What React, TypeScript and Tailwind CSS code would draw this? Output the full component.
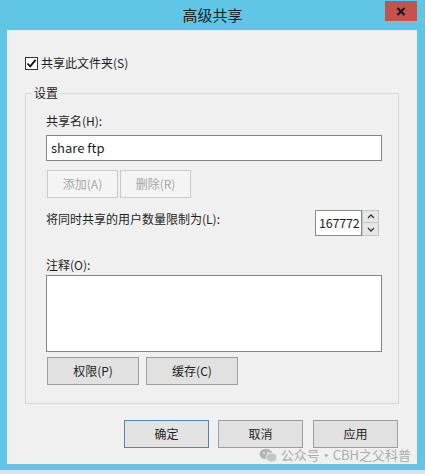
import type { ReactNode } from "react";

const FONT = { fontFamily: '"Noto Sans CJK SC", "Noto Sans", sans-serif' };

function WinButton({
  children,
  w,
  disabled = false,
  primary = false,
  className = "",
}: {
  children: ReactNode;
  w: string;
  disabled?: boolean;
  primary?: boolean;
  className?: string;
}) {
  const tone = disabled
    ? "bg-[#f4f4f4] border-[#cacaca] text-[#a6a6a6]"
    : primary
      ? "bg-[#e3e3e3] border-[#4f86b5] text-[#1e1e1e]"
      : "bg-[#e1e1e1] border-[#9d9d9d] text-[#1e1e1e]";
  return (
    <div
      className={`${w} h-[28px] border flex items-center justify-center text-[12px] leading-[16px] ${tone} ${className}`}
    >
      {children}
    </div>
  );
}

function SpinBox() {
  return (
    <div className="flex mr-[3px]">
      <div className="w-[47px] h-[26px] bg-white border border-[#8a8a8a] flex items-center overflow-hidden pl-[3px] text-[12.5px] text-[#1e1e1e] leading-[16px] tracking-[-0.2px]">
        167772
      </div>
      <div className="flex flex-col w-[17px] h-[26px]">
        <div className="h-[13px] bg-[#e6e6e6] border border-[#c4c4c4] flex items-center justify-center">
          <svg width="8" height="5" viewBox="0 0 8 5">
            <path d="M1 4 L4 1 L7 4" stroke="#333" strokeWidth="1.3" fill="none" />
          </svg>
        </div>
        <div className="h-[13px] bg-[#e6e6e6] border border-t-0 border-[#c4c4c4] flex items-center justify-center">
          <svg width="8" height="5" viewBox="0 0 8 5">
            <path d="M1 1 L4 4 L7 1" stroke="#333" strokeWidth="1.3" fill="none" />
          </svg>
        </div>
      </div>
    </div>
  );
}

export default function App() {
  return (
    <div className="w-[425px] h-[474px] bg-[#61c6e6] flex flex-col overflow-hidden" style={FONT}>
      {/* title bar */}
      <div className="h-[30px] relative flex items-center justify-center">
        <span className="text-[15px] leading-[20px] text-[#1b1b1b]">高级共享</span>
        <div className="absolute left-[385px] top-[1px] w-[32px] h-[20px] bg-[#c75050] flex items-center justify-center">
          <svg width="10" height="9" viewBox="0 0 10 9">
            <path d="M1.5 1 L8.5 8 M8.5 1 L1.5 8" stroke="#1a1a1a" strokeWidth="2.2" />
          </svg>
        </div>
      </div>

      {/* client area */}
      <div className="ml-[7px] w-[410px] h-[434px] bg-[#f0f0f0] relative flex flex-col text-[#1e1e1e]">
        <div className="pt-[25px] pl-[18px] flex items-center h-[41px] gap-[3px]">
          <div className="w-[13px] h-[13px] bg-white border border-[#333] flex items-center justify-center">
            <svg width="11" height="11" viewBox="0 0 11 11">
              <path d="M1.5 5.5 L4.2 8.3 L9.6 1.8" stroke="#111" strokeWidth="1.8" fill="none" />
            </svg>
          </div>
          <span className="text-[12px] leading-[16px]">共享此文件夹(S)</span>
        </div>

        {/* settings group */}
        <div className="mt-[22px] mx-[18px] border border-[#d8d8d8] relative pl-[20px] pr-[16px] pt-[19px] pb-[18px]">
          <span className="absolute left-[6px] top-[-9px] px-[2px] bg-[#f0f0f0] text-[12px] leading-[16px]">
            设置
          </span>

          <div className="text-[12px] leading-[16px]">共享名(H):</div>
          <div className="mt-[6px] h-[26px] bg-white border border-[#858585] flex items-center px-[4px] text-[13px] leading-[16px]">
            share ftp
          </div>

          <div className="mt-[9px] flex gap-[2px] pl-[1px]">
            <WinButton w="w-[71px]" disabled>
              添加(A)
            </WinButton>
            <WinButton w="w-[71px]" disabled>
              删除(R)
            </WinButton>
          </div>

          <div className="mt-[12px] flex items-start justify-between">
            <span className="mt-[1px] text-[12px] leading-[16px]">将同时共享的用户数量限制为(L):</span>
            <SpinBox />
          </div>

          <div className="mt-[21px] text-[12px] leading-[16px]">注释(O):</div>
          <div className="mt-[2px] h-[77px] bg-white border border-[#858585]" />

          <div className="mt-[5px] flex gap-[7px] pl-[1px]">
            <WinButton w="w-[92px]">权限(P)</WinButton>
            <WinButton w="w-[92px]">缓存(C)</WinButton>
          </div>
        </div>

        {/* dialog buttons */}
        <div className="mt-[16px] pr-[19px] flex justify-end">
          <WinButton w="w-[85px]" primary>
            确定
          </WinButton>
          <WinButton w="w-[85px]" className="ml-[9px]">
            取消
          </WinButton>
          <WinButton w="w-[85px]" className="ml-[10px]">
            应用
          </WinButton>
        </div>

        {/* watermark */}
        <div className="absolute right-[6px] bottom-[1px] flex items-center gap-[3px] text-[#acacac] text-[13px] leading-[16px]">
          <svg width="19" height="15" viewBox="0 0 19 15">
            <ellipse cx="7" cy="6" rx="6.5" ry="5.3" fill="#b4b4b4" />
            <ellipse cx="12.5" cy="9.5" rx="5.5" ry="4.5" fill="#c4c4c4" stroke="#f0f0f0" strokeWidth="0.8" />
            <circle cx="5" cy="5" r="0.9" fill="#f0f0f0" />
            <circle cx="9" cy="5" r="0.9" fill="#f0f0f0" />
          </svg>
          <span>公众号·CBH之父科普</span>
        </div>
      </div>

      <div className="h-[6px]" />
      <div className="flex-1 bg-[#dde2e6]" />
    </div>
  );
}
